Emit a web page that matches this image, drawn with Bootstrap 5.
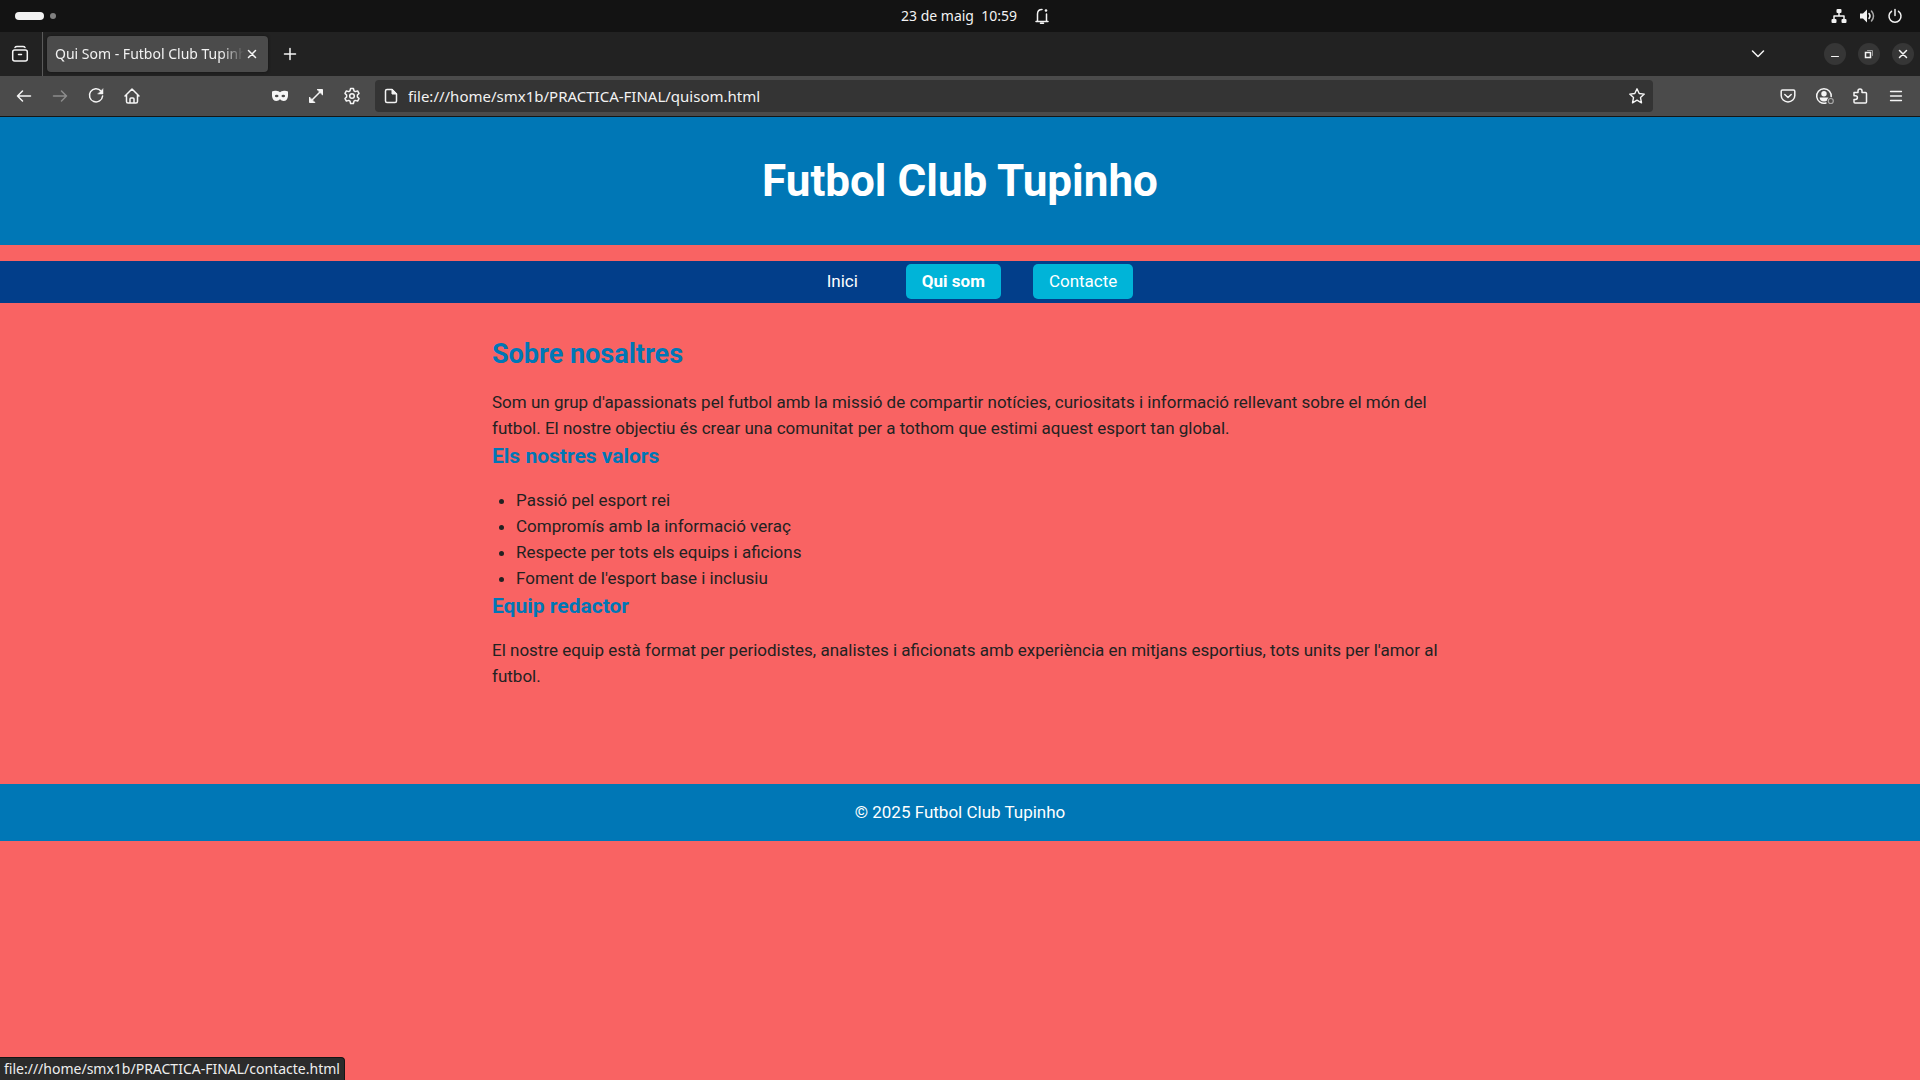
<!DOCTYPE html>
<html lang="ca">
<head>
<meta charset="utf-8">
<meta name="viewport" content="width=device-width, initial-scale=1">
<title>Qui Som - Futbol Club Tupinho</title>
<link href="https://cdn.jsdelivr.net/npm/bootstrap@5.3.0/dist/css/bootstrap.min.css" rel="stylesheet">
<style>
  :root { --club-blue: #0077b6; --club-navy: #023e8a; --club-cyan: #00b4d8; --club-red: #f96363; }
  body { background: var(--club-red); color: #222; font-family: Roboto, "Liberation Sans", sans-serif; font-size: 17px; line-height: 26px; }
  svg { display: block; fill: none; stroke: currentColor; stroke-width: 1.5; stroke-linecap: round; stroke-linejoin: round; }
  .desktop-ui { font-family: "Noto Sans", "Open Sans", sans-serif; color: #f2f2f2; font-size: 14px; line-height: 20px; }
  .sysbar { height: 32px; background: #131313; }
  .sysbar > div { flex: 1 1 0; }
  .sysbar .clock-area { flex: 0 0 auto; padding-left: 34px; gap: 16px; }
  .workspaces { padding-left: 15px; gap: 6px; }
  .workspace-on { width: 29px; height: 8px; background: #f2f2f2; }
  .workspace-off { width: 6px; height: 6px; background: #808080; }
  .tray { gap: 12px; padding-right: 17px; }
  .tabstrip { height: 44px; background: #222; }
  .tool { width: 36px; height: 32px; display: flex; align-items: center; justify-content: center; padding: 0; border: 0; background: none; color: #f5f5f5; border-radius: 4px; }
  .tool:disabled { color: #8c8c8c; }
  .view-area { width: 43px; padding-right: 2px; border-right: 1px solid #5a5a5a; }
  .tab-open { width: 221px; height: 36px; margin-left: 4px; padding: 0 8px; background: #4b4b4b; border-radius: 4px; box-shadow: 0 0 3px #111; }
  .tab-label { white-space: nowrap; overflow: hidden; color: #f2f2f2; -webkit-mask-image: linear-gradient(to right, #000 88%, transparent); mask-image: linear-gradient(to right, #000 88%, transparent); }
  .tab-open .tool { width: 16px; height: 20px; }
  .win-controls { gap: 12px; padding-right: 6px; margin-left: 48px; }
  .win-controls .tool { width: 22px; height: 22px; border-radius: 50%; background: #363636; }
  .toolbar { height: 41px; background: #4b4b4b; border-bottom: 1px solid #151515; padding: 0 6px; }
  .tool-gap { width: 112px; }
  .address { height: 32px; background: #343434; border-radius: 4px; margin: 0 5px; padding-left: 8px; gap: 9px; }
  .address input { background: none; border: 0; outline: 0; color: #f2f2f2; font-size: 15px; line-height: 20px; padding: 0; min-width: 0; }
  .address .tool { width: 32px; }
  .statusbar { background: #2b2b2b; border: 1px solid #151515; border-width: 1px 1px 0 0; border-top-right-radius: 4px; line-height: 22px; padding: 0 4px; color: #eee; }
  .club-header, .club-footer { background: var(--club-blue); color: #fff; }
  .club-header { padding: 32px; margin-bottom: 16px; }
  .club-header h1 { font-size: 44px; line-height: 64px; font-weight: 700; }
  .club-nav { background: var(--club-navy); gap: 32px; padding: 3px 0 4px 24px; }
  .club-nav a { color: #fff; text-decoration: none; padding: 8px 16px; line-height: 19px; border-radius: 5px; }
  .club-nav a.active, .club-nav a.hovered, .club-nav a:hover { background: var(--club-cyan); }
  .club-main { max-width: 1000px; padding: 32px 8px 32px 32px; }
  .club-main h2, .club-main h3 { color: var(--club-blue); font-weight: 700; margin: 0 0 16px; }
  .club-main h2 { font-size: 27px; line-height: 38px; }
  .club-main h3 { font-size: 21px; line-height: 30px; }
  .club-main ul { padding-left: 24px; }
  .club-footer { margin-top: 63px; padding: 16px; line-height: 25px; }
</style>
</head>
<body>
<div class="desktop-ui">
  <div class="sysbar d-flex align-items-center">
    <div class="workspaces d-flex align-items-center" aria-label="Espais de treball">
      <span class="workspace-on rounded-pill"></span><span class="workspace-off rounded-circle"></span>
    </div>
    <div class="clock-area d-flex align-items-center">
      <time class="text-nowrap" datetime="2025-05-23T10:59">23 de maig&nbsp; 10:59</time>
      <svg width="18" height="18" viewBox="0 0 18 18" stroke-width="1.4"><path d="M3 14.500h12M4.500 14V7c0-3 2-4.500 4.500-4.500M13.500 7v7M7.500 16.300h3"/><circle cx="13" cy="3.500" r="1.300" fill="currentColor" stroke="none"/></svg>
    </div>
    <div class="tray d-flex align-items-center justify-content-end">
      <svg width="16" height="16" viewBox="0 0 16 16"><path d="M8 4v4M3 12V8h10v4"/><g fill="currentColor" stroke="none"><rect x="5.500" y="1" width="5" height="4" rx="1"/><rect x="0.500" y="11" width="5" height="4" rx="1"/><rect x="10.500" y="11" width="5" height="4" rx="1"/></g></svg>
      <svg width="16" height="16" viewBox="0 0 16 16"><path d="M1 5.500h3l4-4v13l-4-4H1z" fill="currentColor" stroke="none"/><path d="M10 5.500q2 2.500 0 5" /><path d="M12.500 3q4 5 0 10" stroke="#aaa"/></svg>
      <svg width="16" height="16" viewBox="0 0 16 16"><path d="M8 1.500v6M4.500 3.300a6 6 0 1 0 7 0"/></svg>
    </div>
  </div>

  <div class="tabstrip d-flex align-items-center">
    <div class="view-area h-100 d-flex align-items-center justify-content-center">
      <button class="tool" aria-label="Firefox View"><svg width="18" height="18" viewBox="0 0 18 18"><path d="M4 2.500Q4.500 1.500 6 1.500h6q1.500 0 2 1"/><rect x="1.700" y="5" width="14.600" height="11" rx="2"/><path d="M7.500 9.500h3"/></svg></button>
    </div>
    <div class="tab-open d-flex align-items-center">
      <span class="tab-label flex-grow-1">Qui Som - Futbol Club Tupinho</span>
      <button class="tool flex-shrink-0" aria-label="Tanca la pestanya"><svg width="10" height="10" viewBox="0 0 10 10"><path d="M1.500 1.500l7 7M8.500 1.500l-7 7"/></svg></button>
    </div>
    <button class="tool ms-1" aria-label="Pestanya nova"><svg width="14" height="14" viewBox="0 0 14 14"><path d="M7 1.500v11M1.500 7h11"/></svg></button>
    <button class="tool ms-auto" aria-label="Llista de pestanyes"><svg width="14" height="14" viewBox="0 0 14 14"><path d="M1.500 4L7 9.500 12.500 4"/></svg></button>
    <div class="win-controls d-flex">
      <button class="tool" aria-label="Minimitza"><svg width="10" height="10" viewBox="0 0 10 10"><path d="M1.500 7.500h7" stroke-width="1"/></svg></button>
      <button class="tool" aria-label="Restaura"><svg width="10" height="10" viewBox="0 0 10 10"><path d="M1.500 3.500h5v5h-5z" stroke-linejoin="miter"/><path d="M3.500 1.500h5v5" stroke="#999" stroke-width="1"/></svg></button>
      <button class="tool" aria-label="Tanca"><svg width="10" height="10" viewBox="0 0 10 10"><path d="M1.500 1.500l7 7M8.500 1.500l-7 7"/></svg></button>
    </div>
  </div>

  <div class="toolbar d-flex align-items-center">
    <button class="tool" aria-label="Enrere"><svg width="18" height="18" viewBox="0 0 18 18"><path d="M15.500 9h-13M7.500 4l-5 5 5 5"/></svg></button>
    <button class="tool" aria-label="Endavant" disabled><svg width="18" height="18" viewBox="0 0 18 18"><path d="M2.500 9h13M10.500 4l5 5-5 5"/></svg></button>
    <button class="tool" aria-label="Recarrega"><svg width="18" height="18" viewBox="0 0 18 18"><path d="M14 4A6.600 6.600 0 1 0 15.600 9"/><path d="M16 2v5h-5z" fill="currentColor" stroke-width=".5"/></svg></button>
    <button class="tool" aria-label="Inici"><svg width="18" height="18" viewBox="0 0 18 18"><path d="M2 9l7-7 7 7M3.500 8v6.500q0 1.500 1.500 1.500h8q1.500 0 1.500-1.500V8M7 16v-4q0-1 1-1h2q1 0 1 1v4"/></svg></button>
    <span class="tool-gap"></span>
    <button class="tool" aria-label="Navegació privada"><svg width="18" height="18" viewBox="0 0 18 18"><path fill="currentColor" fill-rule="evenodd" stroke="none" d="M1 4.500Q3 3.500 5 3.800Q8 4 9 5.300Q10 4 13 3.800Q15 3.500 17 4.500V9Q16.500 14 12.500 14Q10.500 14 9 12.300Q7.500 14 5.500 14Q1.500 14 1 9zM3.900 9a1.800 1.300 0 1 0 3.600 0a1.800 1.300 0 1 0-3.600 0M10.500 9a1.800 1.300 0 1 0 3.600 0a1.800 1.300 0 1 0-3.600 0"/></svg></button>
    <button class="tool" aria-label="Pantalla completa"><svg width="18" height="18" viewBox="0 0 18 18"><path d="M4 14L14 4"/><path d="M10.500 2.500h5v5zM2.500 10.500v5h5z" fill="currentColor" stroke-width="1"/></svg></button>
    <button class="tool" aria-label="Configuració"><svg width="18" height="18" viewBox="0 0 18 18"><circle cx="9" cy="9" r="2.300"/><path d="M7.600 1.500h2.800l.6 2.300 1.300.8 2.300-.7 1.400 2.500-1.600 1.700v1.800l1.600 1.700-1.400 2.500-2.300-.7-1.300.8-.6 2.300H7.600L7 14.200l-1.300-.8-2.300.7L2 11.600l1.600-1.700V8.100L2 6.400l1.400-2.500 2.300.7L7 3.800z"/></svg></button>
    <div class="address d-flex align-items-center flex-grow-1">
      <svg width="16" height="16" viewBox="0 0 16 16"><path d="M4 1.500h5l4.500 4.500v7q0 1.500-1.500 1.500H4q-1.500 0-1.500-1.500V3Q2.500 1.500 4 1.500z"/><path d="M9 1.500V6h4.500z" fill="currentColor" stroke-width="1"/></svg>
      <input class="flex-grow-1" type="text" aria-label="Adreça" value="file:///home/smx1b/PRACTICA-FINAL/quisom.html">
      <button class="tool" aria-label="Afegeix a preferits"><svg width="18" height="18" viewBox="0 0 18 18"><path d="M9 1.800l2.200 4.700 5.100.6-3.800 3.500 1 5.200L9 13.200l-4.500 2.600 1-5.200L1.700 7.100l5.100-.6z" stroke-width="1.400"/></svg></button>
    </div>
    <span class="tool-gap"></span>
    <button class="tool" aria-label="Pocket"><svg width="18" height="18" viewBox="0 0 18 18"><path d="M3.500 3h11q1.300 0 1.300 1.300V8.500a6.800 6.400 0 0 1-13.600 0V4.300Q2.200 3 3.500 3zM5.800 7.500L9 10.500l3.200-3"/></svg></button>
    <button class="tool" aria-label="Compte"><svg width="18" height="18" viewBox="0 0 18 18" overflow="visible"><path d="M11 16A7.300 7.300 0 1 1 16.200 10"/><circle cx="9" cy="6.800" r="2.700" fill="currentColor" stroke="none"/><path d="M4.500 10.500h9l-.8 2.500q-1.700 1.500-3.700 1.500T5.300 13z" fill="currentColor" stroke="none"/><circle cx="15.800" cy="14" r="3.800" fill="#4b4b4b" stroke="none"/><circle cx="15.800" cy="14" r="2.500" stroke="#a8a8a8" stroke-width="1.200"/></svg></button>
    <button class="tool" aria-label="Extensions"><svg width="18" height="18" viewBox="0 0 18 18"><path d="M3 5.500h4V4a2 2 0 0 1 4 0v1.500h3.500q1 0 1 1V15q0 1-1 1H4q-1 0-1-1v-2.500h1.500a1.900 1.900 0 0 0 0-3.800H3z"/></svg></button>
    <button class="tool" aria-label="Menú"><svg width="14" height="14" viewBox="0 0 14 14"><path d="M1.500 2.500h11M1.500 7h11M1.500 11.500h11" stroke-width="1.300"/></svg></button>
  </div>
</div>

<header class="club-header text-center"><h1 class="m-0">Futbol Club Tupinho</h1></header>
<nav class="club-nav d-flex justify-content-center align-items-start">
  <a href="#inici">Inici</a>
  <a href="#quisom" class="active fw-bold" aria-current="page">Qui som</a>
  <a href="#contacte" class="hovered">Contacte</a>
</nav>
<main class="club-main mx-auto">
  <h2>Sobre nosaltres</h2>
  <p class="m-0">Som un grup d'apassionats pel futbol amb la missió de compartir notícies, curiositats i informació rellevant sobre el món del futbol. El nostre objectiu és crear una comunitat per a tothom que estimi aquest esport tan global.</p>
  <h3>Els nostres valors</h3>
  <ul class="mb-0">
    <li>Passió pel esport rei</li>
    <li>Compromís amb la informació veraç</li>
    <li>Respecte per tots els equips i aficions</li>
    <li>Foment de l'esport base i inclusiu</li>
  </ul>
  <h3>Equip redactor</h3>
  <p class="m-0">El nostre equip està format per periodistes, analistes i aficionats amb experiència en mitjans esportius, tots units per l'amor al futbol.</p>
</main>
<footer class="club-footer text-center">© 2025 Futbol Club Tupinho</footer>

<div class="statusbar desktop-ui position-fixed bottom-0 start-0">file:///home/smx1b/PRACTICA-FINAL/contacte.html</div>
<script src="https://cdn.jsdelivr.net/npm/bootstrap@5.3.0/dist/js/bootstrap.bundle.min.js"></script>
</body>
</html>
